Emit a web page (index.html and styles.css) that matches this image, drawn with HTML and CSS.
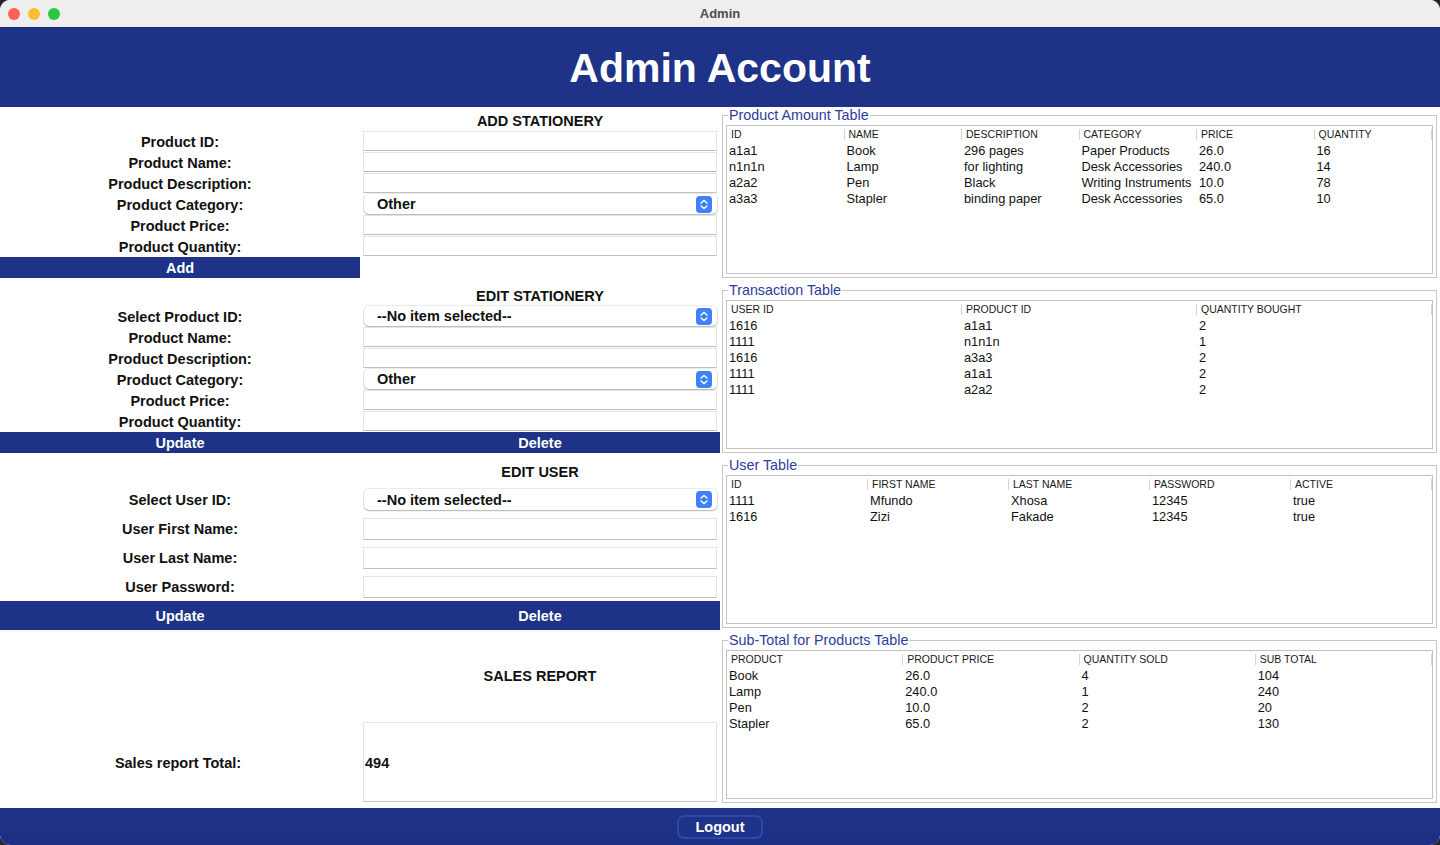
FILE: index.html
```html
<!DOCTYPE html>
<html lang="en">
<head>
    <meta charset="UTF-8">
    <meta name="viewport" content="width=device-width, initial-scale=1.0">
    <title>Admin</title>
    <link rel="stylesheet" href="styles.css">
</head>
<body>
<div class="window">
    <div class="titlebar">
        <div class="lights">
            <span class="light red"></span>
            <span class="light yellow"></span>
            <span class="light green"></span>
        </div>
        <div class="win-title">Admin</div>
        <div></div>
    </div>

    <header class="header">Admin Account</header>

    <main class="main">
        <div class="forms">
            <!-- add stationery -->
            <section class="block">
                <h2 class="block-title add-title">ADD STATIONERY</h2>
                <div class="row"><label>Product ID:</label><div class="field"><input type="text" class="text-field"></div></div>
                <div class="row"><label>Product Name:</label><div class="field"><input type="text" class="text-field"></div></div>
                <div class="row"><label>Product Description:</label><div class="field"><input type="text" class="text-field"></div></div>
                <div class="row"><label>Product Category:</label><div class="field"><div class="combo"><span>Other</span><svg class="stepper" width="16" height="17" viewBox="0 0 16 17"><rect width="16" height="17" rx="4" fill="#3d83f6"/><path d="M5 7 L8 4.5 L11 7" stroke="#fff" stroke-width="1.5" fill="none" stroke-linecap="round" stroke-linejoin="round"/><path d="M5 10 L8 12.5 L11 10" stroke="#fff" stroke-width="1.5" fill="none" stroke-linecap="round" stroke-linejoin="round"/></svg></div></div></div>
                <div class="row"><label>Product Price:</label><div class="field"><input type="text" class="text-field"></div></div>
                <div class="row"><label>Product Quantity:</label><div class="field"><input type="text" class="text-field"></div></div>
                <div class="btn-row"><button class="bar-btn">Add</button><span></span></div>
            </section>

            <!-- edit stationery -->
            <section class="block">
                <h2 class="block-title edit-title">EDIT STATIONERY</h2>
                <div class="row"><label>Select Product ID:</label><div class="field"><div class="combo"><span>--No item selected--</span><svg class="stepper" width="16" height="17" viewBox="0 0 16 17"><rect width="16" height="17" rx="4" fill="#3d83f6"/><path d="M5 7 L8 4.5 L11 7" stroke="#fff" stroke-width="1.5" fill="none" stroke-linecap="round" stroke-linejoin="round"/><path d="M5 10 L8 12.5 L11 10" stroke="#fff" stroke-width="1.5" fill="none" stroke-linecap="round" stroke-linejoin="round"/></svg></div></div></div>
                <div class="row"><label>Product Name:</label><div class="field"><input type="text" class="text-field"></div></div>
                <div class="row"><label>Product Description:</label><div class="field"><input type="text" class="text-field"></div></div>
                <div class="row"><label>Product Category:</label><div class="field"><div class="combo"><span>Other</span><svg class="stepper" width="16" height="17" viewBox="0 0 16 17"><rect width="16" height="17" rx="4" fill="#3d83f6"/><path d="M5 7 L8 4.5 L11 7" stroke="#fff" stroke-width="1.5" fill="none" stroke-linecap="round" stroke-linejoin="round"/><path d="M5 10 L8 12.5 L11 10" stroke="#fff" stroke-width="1.5" fill="none" stroke-linecap="round" stroke-linejoin="round"/></svg></div></div></div>
                <div class="row"><label>Product Price:</label><div class="field"><input type="text" class="text-field"></div></div>
                <div class="row"><label>Product Quantity:</label><div class="field"><input type="text" class="text-field"></div></div>
                <div class="btn-row"><button class="bar-btn">Update</button><button class="bar-btn">Delete</button></div>
            </section>

            <!-- edit user -->
            <section class="block">
                <h2 class="block-title user-title">EDIT USER</h2>
                <div class="row user-row"><label>Select User ID:</label><div class="field"><div class="combo"><span>--No item selected--</span><svg class="stepper" width="16" height="17" viewBox="0 0 16 17"><rect width="16" height="17" rx="4" fill="#3d83f6"/><path d="M5 7 L8 4.5 L11 7" stroke="#fff" stroke-width="1.5" fill="none" stroke-linecap="round" stroke-linejoin="round"/><path d="M5 10 L8 12.5 L11 10" stroke="#fff" stroke-width="1.5" fill="none" stroke-linecap="round" stroke-linejoin="round"/></svg></div></div></div>
                <div class="row user-row"><label>User First Name:</label><div class="field"><input type="text" class="text-field"></div></div>
                <div class="row user-row"><label>User Last Name:</label><div class="field"><input type="text" class="text-field"></div></div>
                <div class="row user-row"><label>User Password:</label><div class="field"><input type="text" class="text-field"></div></div>
                <div class="btn-row user-btns"><button class="bar-btn">Update</button><button class="bar-btn">Delete</button></div>
            </section>

            <!-- sales report -->
            <section class="block sales">
                <h2 class="block-title sales-title">SALES REPORT</h2>
                <div class="row sales-row"><label>Sales report Total:</label><div class="field"><div class="sales-box">494</div></div></div>
            </section>
        </div>

        <div class="tables">
            <fieldset class="panel">
                <legend>Product Amount Table</legend>
                <div class="scroll-box">
                    <table class="data-table">
                        <thead><tr><th>ID</th><th>NAME</th><th>DESCRIPTION</th><th>CATEGORY</th><th>PRICE</th><th>QUANTITY</th></tr></thead>
                        <tbody>
                            <tr><td>a1a1</td><td>Book</td><td>296 pages</td><td>Paper Products</td><td>26.0</td><td>16</td></tr>
                            <tr><td>n1n1n</td><td>Lamp</td><td>for lighting</td><td>Desk Accessories</td><td>240.0</td><td>14</td></tr>
                            <tr><td>a2a2</td><td>Pen</td><td>Black</td><td>Writing Instruments</td><td>10.0</td><td>78</td></tr>
                            <tr><td>a3a3</td><td>Stapler</td><td>binding paper</td><td>Desk Accessories</td><td>65.0</td><td>10</td></tr>
                        </tbody>
                    </table>
                </div>
            </fieldset>

            <fieldset class="panel">
                <legend>Transaction Table</legend>
                <div class="scroll-box">
                    <table class="data-table">
                        <thead><tr><th>USER ID</th><th>PRODUCT ID</th><th>QUANTITY BOUGHT</th></tr></thead>
                        <tbody>
                            <tr><td>1616</td><td>a1a1</td><td>2</td></tr>
                            <tr><td>1111</td><td>n1n1n</td><td>1</td></tr>
                            <tr><td>1616</td><td>a3a3</td><td>2</td></tr>
                            <tr><td>1111</td><td>a1a1</td><td>2</td></tr>
                            <tr><td>1111</td><td>a2a2</td><td>2</td></tr>
                        </tbody>
                    </table>
                </div>
            </fieldset>

            <fieldset class="panel">
                <legend>User Table</legend>
                <div class="scroll-box">
                    <table class="data-table">
                        <thead><tr><th>ID</th><th>FIRST NAME</th><th>LAST NAME</th><th>PASSWORD</th><th>ACTIVE</th></tr></thead>
                        <tbody>
                            <tr><td>1111</td><td>Mfundo</td><td>Xhosa</td><td>12345</td><td>true</td></tr>
                            <tr><td>1616</td><td>Zizi</td><td>Fakade</td><td>12345</td><td>true</td></tr>
                        </tbody>
                    </table>
                </div>
            </fieldset>

            <fieldset class="panel">
                <legend>Sub-Total for Products Table</legend>
                <div class="scroll-box">
                    <table class="data-table">
                        <thead><tr><th>PRODUCT</th><th>PRODUCT PRICE</th><th>QUANTITY SOLD</th><th>SUB TOTAL</th></tr></thead>
                        <tbody>
                            <tr><td>Book</td><td>26.0</td><td>4</td><td>104</td></tr>
                            <tr><td>Lamp</td><td>240.0</td><td>1</td><td>240</td></tr>
                            <tr><td>Pen</td><td>10.0</td><td>2</td><td>20</td></tr>
                            <tr><td>Stapler</td><td>65.0</td><td>2</td><td>130</td></tr>
                        </tbody>
                    </table>
                </div>
            </fieldset>
        </div>
    </main>

    <footer class="footer">
        <button class="logout-btn">Logout</button>
    </footer>
</div>
</body>
</html>
```

FILE: styles.css
```css
* {
    box-sizing: border-box;
}

html {
    background: #262626;
}

body {
    margin: 0;
    font-family: "Liberation Sans", Arial, sans-serif;
    color: #111;
}

.window {
    width: 1440px;
    height: 845px;
    border-radius: 10px;
    overflow: hidden;
    background: #fff;
    display: flex;
    flex-direction: column;
}

/* title bar */
.titlebar {
    height: 28px;
    flex-shrink: 0;
    background: #efeeef;
    border-bottom: 1px solid #1a2a6e;
    display: grid;
    grid-template-columns: 1fr auto 1fr;
    align-items: center;
}

.lights {
    display: flex;
    gap: 8px;
    padding-left: 8px;
}

.light {
    width: 12px;
    height: 12px;
    border-radius: 50%;
}

.red { background: #fe5f57; }
.yellow { background: #febc2e; }
.green { background: #28c840; }

.win-title {
    font-size: 13px;
    font-weight: bold;
    color: #4d4d4d;
}

/* header */
.header {
    height: 79px;
    flex-shrink: 0;
    background: #1e3287;
    color: #fff;
    font-size: 41px;
    font-weight: bold;
    display: flex;
    justify-content: center;
    align-items: center;
    padding-top: 2px;
}

.main {
    display: grid;
    grid-template-columns: 720px 720px;
    height: 701px;
    flex-shrink: 0;
}

/* left forms */
.forms {
    display: flex;
    flex-direction: column;
}

.block-title {
    margin: 0 0 0 360px;
    font-size: 14.5px;
    line-height: 20px;
    text-align: center;
    font-weight: bold;
}

.add-title { height: 24px; padding-top: 4px; }
.edit-title { height: 28px; padding-top: 8px; }
.user-title { height: 32px; padding-top: 9px; }
.sales-title { height: 92px; padding-top: 36px; }

.row {
    display: grid;
    grid-template-columns: 360px 360px;
    height: 21px;
    align-items: start;
}

.row label {
    font-size: 14.5px;
    font-weight: bold;
    text-align: center;
    line-height: 20px;
    padding-top: 1px;
}

.field {
    padding: 0 3px;
}

.text-field {
    display: block;
    width: 100%;
    height: 20px;
    margin: 0;
    padding: 0;
    border: 1px solid #e4e4e4;
    border-bottom-color: #bfbfbf;
    background: #fff;
}

.combo {
    height: 20px;
    margin-left: 1px;
    border-radius: 5px;
    background: #fff;
    box-shadow: 0 0 0 1px rgba(0, 0, 0, 0.07), 0 1px 1.5px rgba(0, 0, 0, 0.25);
    display: flex;
    align-items: center;
    justify-content: space-between;
    padding: 0 5px 0 13px;
    font-size: 14.5px;
    font-weight: bold;
}

.stepper {
    display: block;
}

.user-row {
    height: 29px;
    align-items: center;
}

.user-row label {
    align-self: start;
    line-height: 27px;
    padding-top: 2px;
}

.user-row .text-field {
    height: 22px;
}

.user-row .combo {
    height: 21px;
}

.btn-row {
    display: grid;
    grid-template-columns: 360px 360px;
    height: 21px;
}

.user-btns {
    height: 29px;
}

.bar-btn {
    border: none;
    margin: 0;
    background: #1e3388;
    color: #fff;
    font-family: inherit;
    font-size: 14.5px;
    font-weight: bold;
    padding: 0;
}

.sales-row {
    height: 80px;
    align-items: center;
}

.sales-row label {
    align-self: center;
    padding: 2px 4px 0 0;
}

.sales-box {
    height: 80px;
    border: 1px solid #e4e4e4;
    border-bottom-color: #c4c4c4;
    display: flex;
    align-items: center;
    padding: 2px 0 0 1px;
    font-size: 14.5px;
    font-weight: bold;
}

/* right tables */
.tables {
    display: flex;
    flex-direction: column;
}

.panel {
    margin: 0 3px 4px 2px;
    padding: 0 3px 3px 3px;
    border: 1px solid #c6c6c6;
    min-width: 0;
}

.panel legend {
    margin-left: 2px;
    padding: 0 1px;
    font-size: 14.3px;
    line-height: 16px;
    color: #2c3c9c;
}

.scroll-box {
    margin-top: 2px;
    height: 149px;
    border: 1px solid #c2c2c2;
    background: #fff;
}

.data-table {
    width: 100%;
    table-layout: fixed;
    border-collapse: collapse;
}

.data-table th {
    height: 16px;
    padding: 0 0 0 4px;
    font-size: 10.5px;
    font-weight: normal;
    text-align: left;
    color: #1a1a1a;
    white-space: nowrap;
    overflow: hidden;
    background: linear-gradient(#d4d4d4, #d4d4d4) right center / 1px 11px no-repeat;
}

.data-table td {
    height: 16px;
    padding: 2px 0 0 2px;
    font-size: 12.8px;
    line-height: 14px;
    white-space: nowrap;
    overflow: hidden;
}

/* footer */
.footer {
    flex: 1;
    background: linear-gradient(#1f3389, #1c2f82);
    display: flex;
    justify-content: center;
    align-items: center;
}

.logout-btn {
    width: 86px;
    height: 24px;
    border: 2px solid #2947ad;
    border-radius: 7px;
    background: #1e3288;
    color: #fff;
    font-family: inherit;
    font-size: 14.5px;
    font-weight: bold;
    padding: 0;
}
```
